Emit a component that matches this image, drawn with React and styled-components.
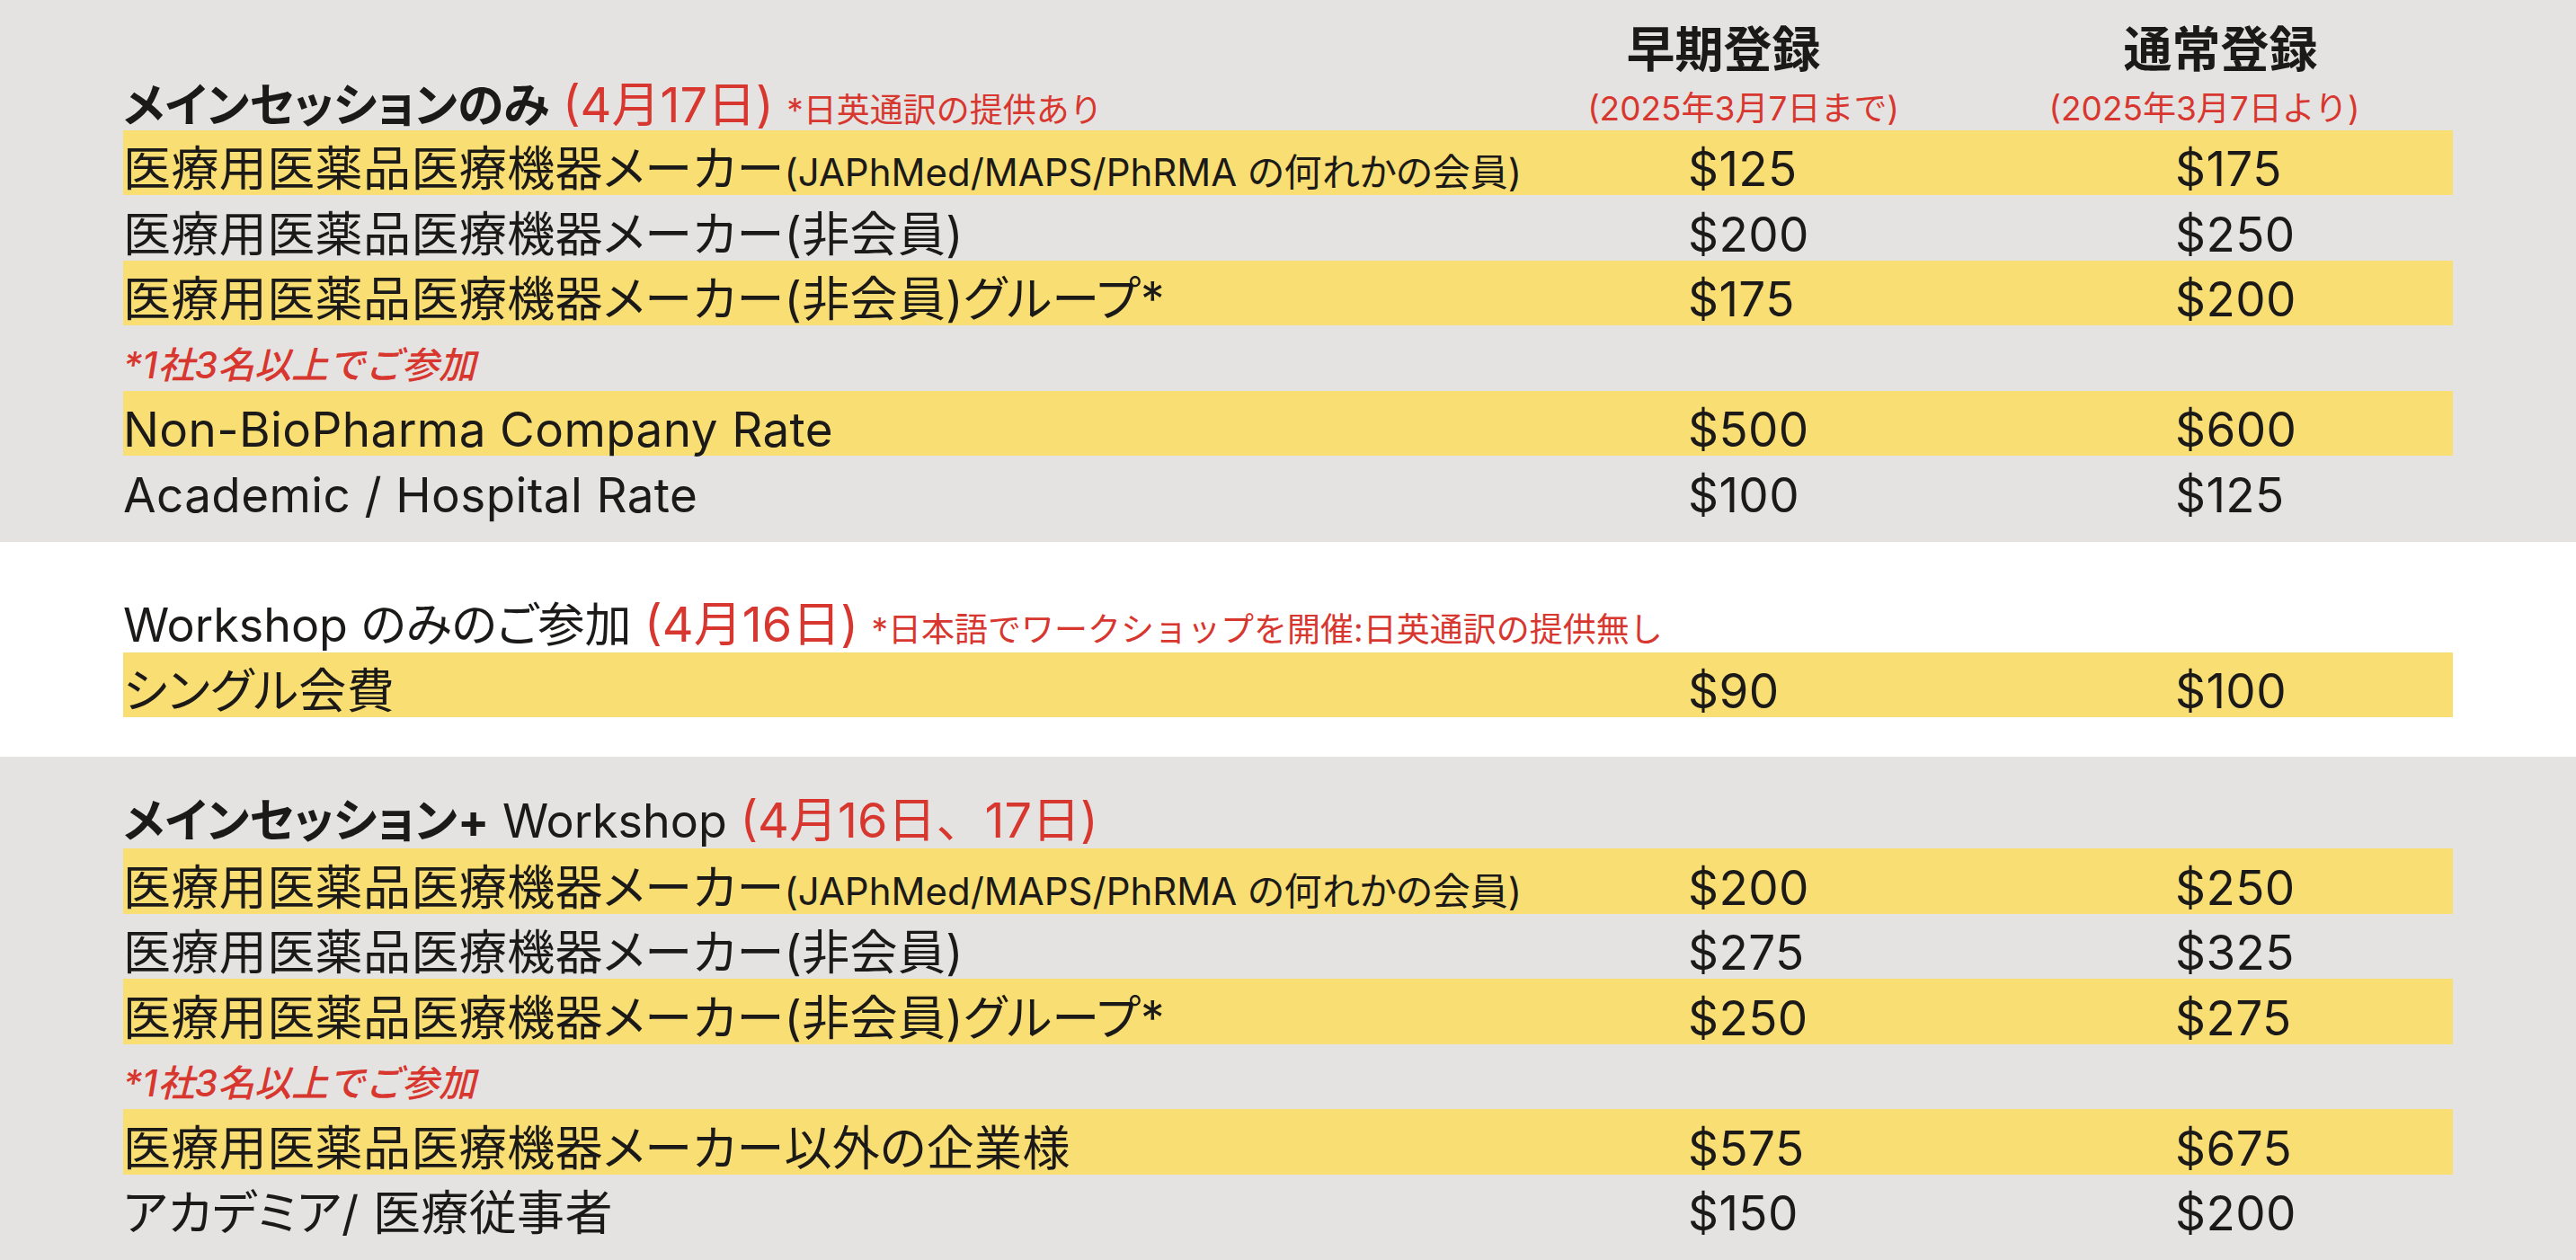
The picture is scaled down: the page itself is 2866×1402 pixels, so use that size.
import React from 'react';
import styled, { createGlobalStyle } from 'styled-components';

const GlobalStyle = createGlobalStyle`
  html, body { margin: 0; padding: 0; background: #ffffff; }
  body {
    font-family: Inter, "Noto Sans CJK JP", sans-serif;
    color: #1b1a19;
    -webkit-font-smoothing: antialiased;
  }
`;

const Page = styled.main`
  width: 2866px;
  display: flex;
  flex-direction: column;
`;

const Section = styled.section`
  background: ${p => (p.$tone === 'gray' ? '#e4e3e1' : '#ffffff')};
  padding: ${p => p.$top}px 137px ${p => p.$bottom}px;
  display: flex;
  flex-direction: column;
`;

const HeadRow = styled.div`
  display: flex;
  align-items: flex-end;
  gap: 153px;
  padding-right: 58.5px;
`;

const HeaderCol = styled.div`
  width: 400px;
  flex: none;
  display: flex;
  flex-direction: column;
  align-items: center;
  gap: 18.6px;
  margin-bottom: 6px;
`;

const HeaderTitle = styled.div`
  font-size: 54px;
  line-height: 54px;
  font-weight: 600;
  white-space: nowrap;
  transform: translateX(${p => p.$nudge || 0}px);
`;

const HeaderSub = styled.div`
  font-size: 37px;
  line-height: 37px;
  color: #d8372f;
  white-space: nowrap;
  transform: translateX(${p => p.$nudge || 0}px);
`;

const Title = styled.h2`
  flex: 1;
  margin: 0 0 ${p => p.$gap}px;
  font-size: 52px;
  line-height: 52px;
  font-weight: 400;
  white-space: nowrap;
  font-feature-settings: "palt";
`;

const Strong = styled.span`
  font-weight: 700;
`;

const Red = styled.span`
  color: #d8372f;
  font-size: 54px;
  line-height: 1;
  font-feature-settings: normal;
`;

const RedNote = styled.span`
  color: #d8372f;
  font-size: 37px;
  line-height: 1;
  font-feature-settings: normal;
`;

const Row = styled.div`
  display: grid;
  grid-template-columns: 1741px 542px 1fr;
  height: 72.5px;
  box-sizing: border-box;
  align-items: end;
  padding-bottom: 2px;
  background: ${p => (p.$hl ? '#f9df73' : 'transparent')};
  font-size: 53px;
  line-height: 53px;
  letter-spacing: 0.4px;
`;

const Label = styled.div`
  white-space: nowrap;
  font-feature-settings: "palt";
`;

const Small = styled.span`
  font-size: 42px;
  line-height: 1;
  letter-spacing: 0;
`;

const Price = styled.div`
  white-space: nowrap;
`;

const Note = styled.div`
  grid-column: 1 / -1;
  color: #d8372f;
  font-size: 41px;
  line-height: 41px;
  font-style: italic;
  font-weight: 500;
  letter-spacing: 0;
  margin-bottom: 6px;
`;

const memberLabel = (
  <>
    医療用医薬品医療機器メーカー<Small>(JAPhMed/MAPS/PhRMA の何れかの会員)</Small>
  </>
);

const mainRows = [
  { hl: true, label: memberLabel, a: '$125', b: '$175' },
  { hl: false, label: '医療用医薬品医療機器メーカー(非会員)', a: '$200', b: '$250' },
  { hl: true, label: '医療用医薬品医療機器メーカー(非会員)グループ*', a: '$175', b: '$200' },
  { note: '*1社3名以上でご参加' },
  { hl: true, label: 'Non-BioPharma Company Rate', a: '$500', b: '$600' },
  { hl: false, label: 'Academic / Hospital Rate', a: '$100', b: '$125' },
];

const workshopRows = [{ hl: true, label: 'シングル会費', a: '$90', b: '$100' }];

const comboRows = [
  { hl: true, label: memberLabel, a: '$200', b: '$250' },
  { hl: false, label: '医療用医薬品医療機器メーカー(非会員)', a: '$275', b: '$325' },
  { hl: true, label: '医療用医薬品医療機器メーカー(非会員)グループ*', a: '$250', b: '$275' },
  { note: '*1社3名以上でご参加' },
  { hl: true, label: '医療用医薬品医療機器メーカー以外の企業様', a: '$575', b: '$675' },
  { hl: false, label: 'アカデミア/ 医療従事者', a: '$150', b: '$200' },
];

function Rows({ rows }) {
  return rows.map((r, i) =>
    r.note ? (
      <Row key={i}>
        <Note>{r.note}</Note>
      </Row>
    ) : (
      <Row key={i} $hl={r.hl}>
        <Label>{r.label}</Label>
        <Price>{r.a}</Price>
        <Price>{r.b}</Price>
      </Row>
    )
  );
}

export default function App() {
  return (
    <Page>
      <GlobalStyle />
      <Section $tone="gray" $top={29} $bottom={23}>
        <HeadRow>
          <Title $gap={1}>
            <Strong>メインセッションのみ</Strong> <Red>(4月17日)</Red>{' '}
            <RedNote>*日英通訳の提供あり</RedNote>
          </Title>
          <HeaderCol>
            <HeaderTitle>早期登録</HeaderTitle>
            <HeaderSub $nudge={22}>(2025年3月7日まで)</HeaderSub>
          </HeaderCol>
          <HeaderCol>
            <HeaderTitle>通常登録</HeaderTitle>
            <HeaderSub $nudge={-18}>(2025年3月7日より)</HeaderSub>
          </HeaderCol>
        </HeadRow>
        <Rows rows={mainRows} />
      </Section>

      <Section $tone="white" $top={65} $bottom={44}>
        <Title $gap={4}>
          Workshop のみのご参加 <Red>(4月16日)</Red>{' '}
          <RedNote>*日本語でワークショップを開催:日英通訳の提供無し</RedNote>
        </Title>
        <Rows rows={workshopRows} />
      </Section>

      <Section $tone="gray" $top={44} $bottom={25}>
        <Title $gap={4}>
          <Strong>メインセッション+</Strong> Workshop <Red>(4月16日、17日)</Red>
        </Title>
        <Rows rows={comboRows} />
      </Section>
    </Page>
  );
}
